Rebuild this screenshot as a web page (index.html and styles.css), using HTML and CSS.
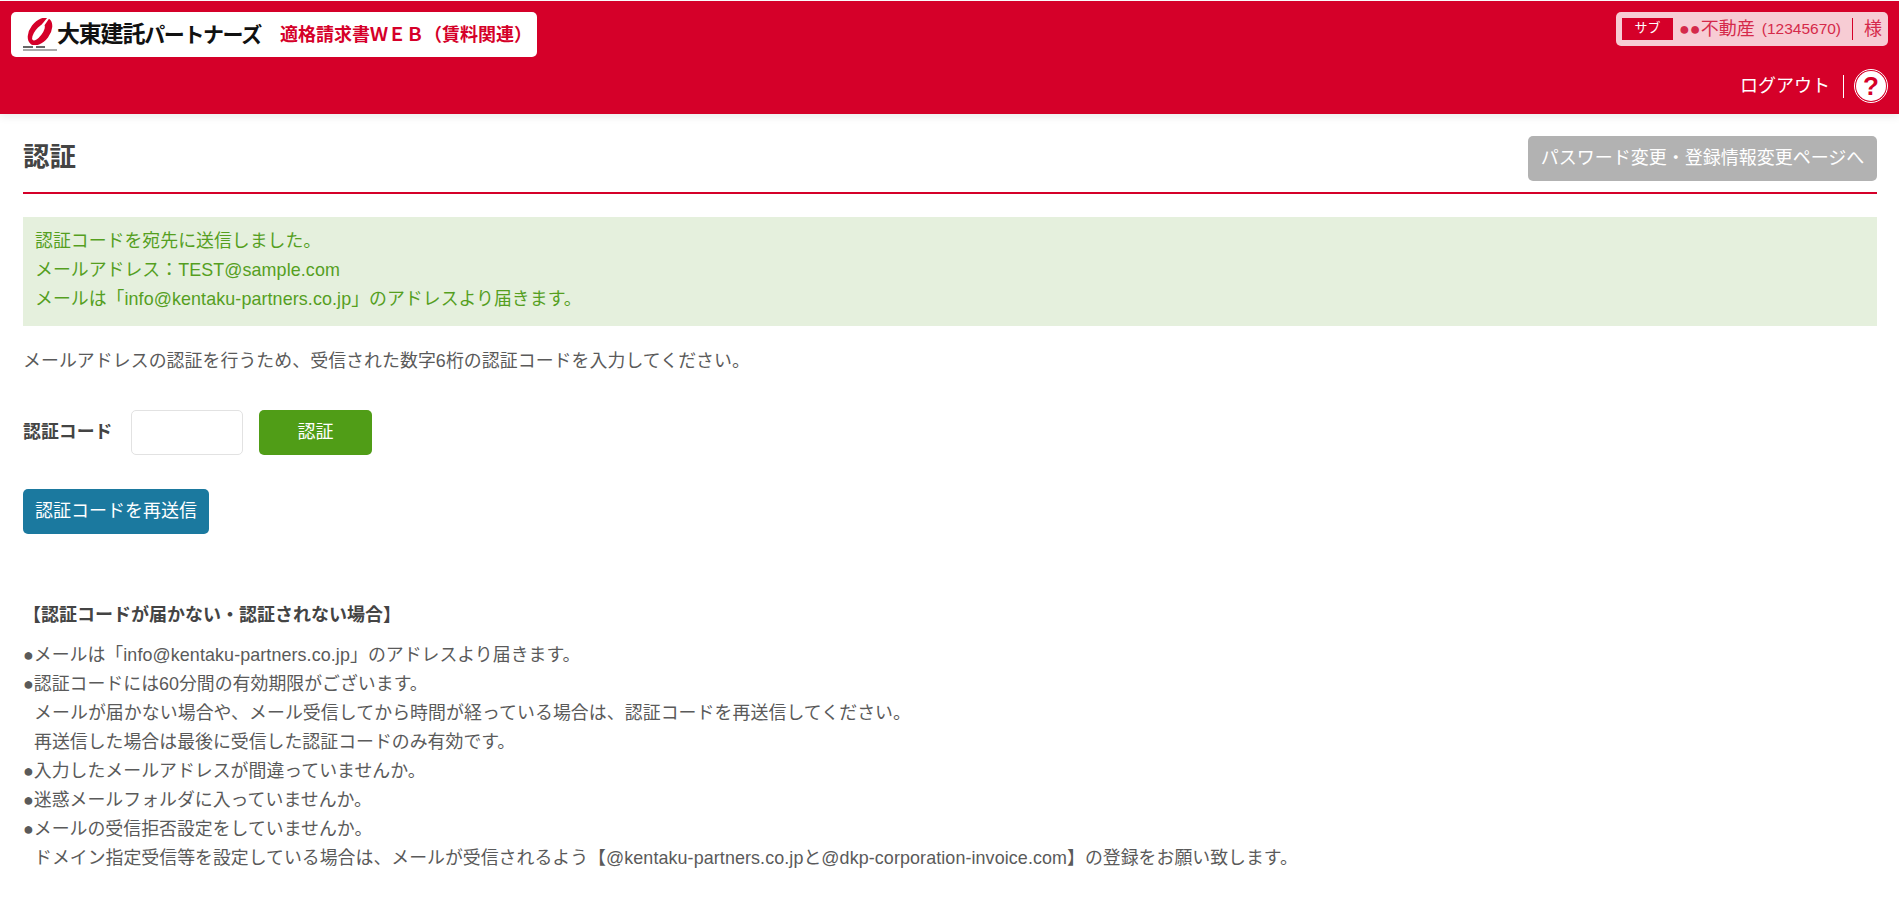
FILE: index.html
```html
<!DOCTYPE html>
<html lang="ja">
<head>
<meta charset="utf-8">
<title>認証</title>
<link rel="stylesheet" href="styles.css">
</head>
<body>
<header class="site-header">
  <div class="brand">
    <div class="logo">
      <div class="logo-mark">
        <svg class="swirl" viewBox="0 0 28 27" width="28" height="27" aria-hidden="true">
          <ellipse cx="14" cy="13.500" rx="10" ry="15.500" transform="rotate(37 14 13.500)" fill="#d50029"/>
          <ellipse cx="12.500" cy="14.500" rx="3.600" ry="9.500" transform="rotate(37 12.500 14.500)" fill="#fff"/>
          <path d="M14.500 8L21.500 -.5 23.500 0 17 9.500Z" fill="#fff"/>
        </svg>
        <span class="logo-bars"></span>
        <span class="logo-fine"></span>
      </div>
      <span class="logo-text">大東建託<span class="logo-kana">パートナーズ</span></span>
    </div>
    <span class="app-title">適格請求書ＷＥＢ（賃料関連）</span>
  </div>
  <div class="header-right">
    <div class="user-box">
      <span class="role">サブ</span>
      <span class="company">●●不動産</span>
      <span class="code">(12345670)</span>
      <span class="honorific">様</span>
    </div>
    <div class="header-actions">
      <a class="logout">ログアウト</a>
      <span class="help"><span class="help-inner">?</span></span>
    </div>
  </div>
</header>
<main class="content">
  <div class="title-row">
    <h1 class="page-title">認証</h1>
    <a class="btn btn-gray">パスワード変更・登録情報変更ページへ</a>
  </div>
  <div class="notice">
    <div>認証コードを宛先に送信しました。</div>
    <div>メールアドレス：<span class="latin">TEST@sample.com</span></div>
    <div>メールは「<span class="latin">info@kentaku-partners.co.jp</span>」のアドレスより届きます。</div>
  </div>
  <p class="lead">メールアドレスの認証を行うため、受信された数字6桁の認証コードを入力してください。</p>
  <div class="code-form">
    <label class="code-label">認証コード</label>
    <input class="code-input" type="text">
    <button class="btn btn-green">認証</button>
  </div>
  <button class="btn btn-blue">認証コードを再送信</button>
  <h2 class="help-title">【認証コードが届かない・認証されない場合】</h2>
  <div class="help-list">
    <div>●メールは「<span class="latin">info@kentaku-partners.co.jp</span>」のアドレスより届きます。</div>
    <div>●認証コードには60分間の有効期限がございます。</div>
    <div class="indent wide">メールが届かない場合や、メール受信してから時間が経っている場合は、認証コードを再送信してください。</div>
    <div class="indent">再送信した場合は最後に受信した認証コードのみ有効です。</div>
    <div>●入力したメールアドレスが間違っていませんか。</div>
    <div>●迷惑メールフォルダに入っていませんか。</div>
    <div>●メールの受信拒否設定をしていませんか。</div>
    <div class="indent">ドメイン指定受信等を設定している場合は、メールが受信されるよう【<span class="latin">@kentaku-partners.co.jp</span>と<span class="latin">@dkp-corporation-invoice.com</span>】の登録をお願い致します。</div>
  </div>
</main>
</body>
</html>
```
FILE: styles.css
```css
* { box-sizing: border-box; }
html, body { margin: 0; padding: 0; }
body {
  background: #fff;
  color: #5a5a5a;
  font-family: "Liberation Sans", "Noto Sans CJK JP", sans-serif;
  font-size: 17.9px;
  line-height: 1.6;
  padding-top: 1px;
}
.latin { letter-spacing: .1px; }
.wide { letter-spacing: .07px; }
.site-header {
  height: 113px;
  background: #d50029;
  display: flex;
  justify-content: space-between;
  padding: 11px 11px 0 11px;
  box-shadow: 0 3px 8px rgba(0,0,0,.08);
}
.brand {
  width: 526px;
  height: 45px;
  background: #fff;
  border-radius: 5px;
  display: flex;
  align-items: center;
  padding-left: 12px;
}
.logo { display: flex; align-items: center; width: 257px; flex: none; }
.logo-mark { width: 34px; height: 35px; display: flex; flex-direction: column; align-items: flex-start; margin-top: 2px; flex: none; }
.swirl { display: block; margin-left: 3px; flex: none; }
.logo-bars { display: block; width: 22px; height: 2px; margin-top: 1px; background: linear-gradient(90deg, #666 0 45%, transparent 45% 60%, #666 60% 100%); }
.logo-fine { display: block; width: 34px; height: 2px; margin-top: 1px; background: #aaa; }
.logo-text {
  color: #111;
  font-weight: 700;
  font-size: 23px;
  line-height: 1;
  letter-spacing: -1.2px;
  white-space: nowrap;
}
.logo-kana { font-size: 21px; letter-spacing: -1.4px; }
.app-title {
  color: #d50029;
  font-size: 18px;
  font-weight: 700;
  line-height: 1;
  white-space: nowrap;
}
.header-right { display: flex; flex-direction: column; align-items: flex-end; }
.user-box {
  width: 272px;
  height: 34px;
  background: #f7ccd4;
  border-radius: 5px;
  display: flex;
  align-items: center;
  padding-left: 6px;
  color: #d5294a;
}
.role {
  width: 51px;
  height: 22px;
  background: #d50029;
  color: #fff;
  font-size: 13px;
  line-height: 20px;
  text-align: center;
}
.company { font-size: 18px; margin-left: 6px; white-space: nowrap; }
.code { font-size: 15.500px; margin-left: 7px; white-space: nowrap; }
.honorific { font-size: 18px; margin-left: 11px; padding-left: 11px; border-left: 1px solid #d50029; line-height: 22px; height: 22px; }
.header-actions { display: flex; align-items: center; margin-top: 23px; }
.logout { color: #fff; font-size: 18px; line-height: 23px; padding-right: 13px; border-right: 1px solid #fff; }
.help {
  width: 34px;
  height: 34px;
  border-radius: 50%;
  border: 1px solid #fff;
  padding: 1px;
  margin-left: 10px;
  display: block;
}
.help-inner {
  display: block;
  width: 100%;
  height: 100%;
  border-radius: 50%;
  background: #fff;
  color: #d50029;
  font-weight: 700;
  font-size: 26px;
  line-height: 30px;
  text-align: center;
}
.content { padding: 0 22px 0 23px; }
.title-row {
  height: 80px;
  border-bottom: 2px solid #d50029;
  display: flex;
  justify-content: space-between;
  align-items: flex-start;
  padding-top: 22px;
}
.page-title {
  margin: 0;
  font-size: 26.500px;
  font-weight: 700;
  color: #444;
  line-height: 43px;
}
.btn {
  display: block;
  border: 0;
  border-radius: 5px;
  color: #fff;
  font-family: inherit;
  font-size: 18px;
  height: 45px;
  line-height: 45px;
  padding: 0 12px;
  text-align: center;
}
.btn-gray { background: #b2b2b2; width: 349px; }
.btn-green { background: #509d17; width: 113px; padding: 0; }
.btn-blue { background: #1b799f; width: 186px; margin-top: 34px; }
.notice {
  margin-top: 23px;
  height: 109px;
  background: #e5f0dd;
  color: #559f1f;
  padding: 10px 12px;
  line-height: 29px;
}
.lead { margin: 21px 0 0; line-height: 29px; letter-spacing: .06px; }
.code-form { display: flex; align-items: center; margin-top: 34px; }
.code-label { font-weight: 700; color: #444; width: 108px; }
.code-input {
  width: 112px;
  height: 45px;
  border: 1px solid #e2e2e2;
  border-radius: 5px;
  background: #fff;
  margin-right: 16px;
}
.help-title {
  margin: 67px 0 0;
  font-size: 18px;
  font-weight: 700;
  color: #444;
  line-height: 29px;
}
.help-list { margin-top: 11px; line-height: 29px; }
.indent { padding-left: 11px; }
```
